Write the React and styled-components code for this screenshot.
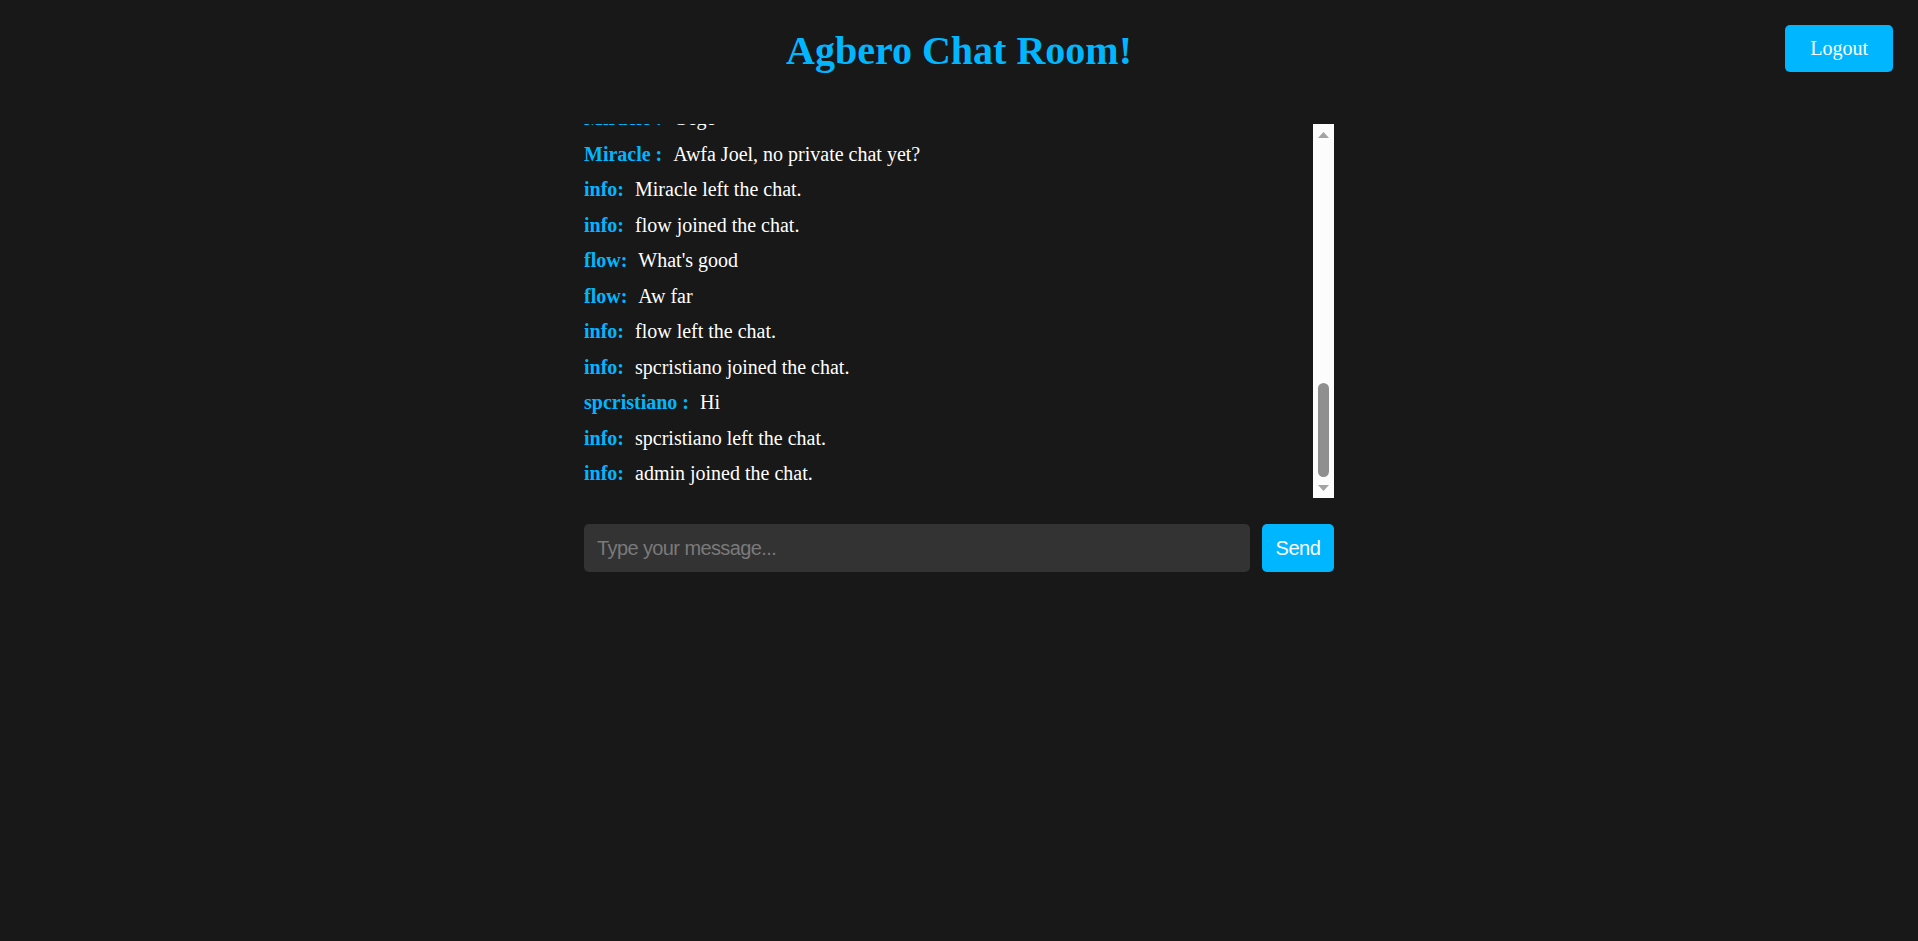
import React, { useLayoutEffect, useRef } from 'react';
import styled, { createGlobalStyle } from 'styled-components';

const BLUE = '#00b7ff';

const GlobalStyle = createGlobalStyle`
  html, body {
    margin: 0;
    padding: 0;
    background: #181818;
    color: #fff;
    font-family: "Liberation Serif", "Times New Roman", serif;
  }
`;

const Page = styled.div`
  min-height: 941px;
  background: #181818;
`;

const Header = styled.header`
  display: grid;
  grid-template-columns: 1fr auto 1fr;
  align-items: start;
`;

const Title = styled.h1`
  grid-column: 2;
  margin: 28px 0 27px;
  font-size: 40px;
  font-weight: bold;
  color: ${BLUE};
  line-height: 46px;
`;

const LogoutButton = styled.button`
  grid-column: 3;
  justify-self: end;
  margin: 25px 25px 0 0;
  padding: 12px 25px;
  border: none;
  border-radius: 5px;
  background: ${BLUE};
  color: #fff;
  font-family: "Liberation Serif", "Times New Roman", serif;
  font-size: 20px;
  line-height: 23px;
  cursor: pointer;
`;

const ChatWrap = styled.main`
  width: 750px;
  margin: 23px auto 0;
`;

const ChatBox = styled.div`
  display: flex;
  height: 374px;
`;

const Messages = styled.div`
  flex: 1;
  overflow: hidden;
`;

const ScrollBar = styled.div`
  width: 21px;
  display: flex;
  flex-direction: column;
  background: #fcfcfc;
`;

const ScrollArrow = styled.div`
  height: ${p => p.$h}px;
  display: flex;
  justify-content: center;
  align-items: ${p => (p.$down ? 'flex-start' : 'flex-end')};
  padding: ${p => (p.$down ? '8px 0 0' : '0 0 3px')};
  box-sizing: border-box;
`;

const Track = styled.div`
  flex: 1;
  display: flex;
  flex-direction: column;
  justify-content: flex-end;
`;

const Thumb = styled.div`
  height: 94px;
  margin: 0 5px;
  border-radius: 6px;
  background: #8f8f8f;
`;

const Row = styled.p`
  margin: 0 0 12.5px;
  font-size: 20px;
  line-height: 23px;
  color: #fff;
`;

const Sender = styled.strong`
  color: ${BLUE};
  margin-right: 11px;
`;

const Composer = styled.form`
  display: flex;
  gap: 12px;
  margin-top: 26px;
`;

const MessageInput = styled.input`
  flex: 1;
  height: 48px;
  box-sizing: border-box;
  padding: 0 13px;
  border: none;
  border-radius: 5px;
  background: #333;
  color: #fff;
  font-family: "Liberation Sans", Arial, sans-serif;
  font-size: 20px;
  letter-spacing: -0.6px;
  outline: none;

  &::placeholder {
    color: #7a7a7a;
  }
`;

const SendButton = styled.button`
  width: 72px;
  height: 48px;
  border: none;
  border-radius: 5px;
  background: ${BLUE};
  color: #fff;
  font-family: "Liberation Sans", Arial, sans-serif;
  font-size: 20px;
  letter-spacing: -0.4px;
  cursor: pointer;
`;

const history = [
  ['info:', 'Joel joined the chat.'],
  ['Joel :', 'Hello everyone'],
  ['info:', 'Miracle joined the chat.'],
  ['Miracle :', 'Hey Joel'],
  ['Joel :', 'How far?'],
  ['Miracle :', 'I dey o'],
  ['info:', 'tunde joined the chat.'],
  ['tunde :', 'Wetin dey happen'],
  ['Joel :', 'Nothing much'],
  ['info:', 'tunde left the chat.'],
  ['Joel :', 'This thing dey work sha'],
  ['Miracle :', 'E dey work well'],
  ['Joel :', 'Na socket.io'],
  ['Miracle :', 'Nice one'],
  ['info:', 'ada joined the chat.'],
  ['ada :', 'Hi guys'],
  ['Joel :', 'Ada!'],
  ['ada :', 'Good evening'],
  ['info:', 'ada left the chat.'],
  ['Joel :', 'I wan add private chat'],
  ['Miracle :', 'When?'],
  ['Joel :', 'Soon'],
  ['info:', 'Joel left the chat.'],
  ['Miracle :', 'Joel?'],
  ['Miracle :', 'Gege'],
  ['Miracle :', 'Awfa Joel, no private chat yet?'],
  ['info:', 'Miracle left the chat.'],
  ['info:', 'flow joined the chat.'],
  ['flow:', "What's good"],
  ['flow:', 'Aw far'],
  ['info:', 'flow left the chat.'],
  ['info:', 'spcristiano joined the chat.'],
  ['spcristiano :', 'Hi'],
  ['info:', 'spcristiano left the chat.'],
  ['info:', 'admin joined the chat.'],
];

export default function App() {
  const listRef = useRef(null);

  useLayoutEffect(() => {
    if (listRef.current) {
      listRef.current.scrollTop = listRef.current.scrollHeight;
    }
  }, []);

  return (
    <Page>
      <GlobalStyle />
      <Header>
        <Title>Agbero Chat Room!</Title>
        <LogoutButton type="button">Logout</LogoutButton>
      </Header>
      <ChatWrap>
        <ChatBox>
          <Messages ref={listRef}>
            {history.map(([who, text], i) => (
              <Row key={i}>
                <Sender>{who}</Sender>
                {text}
              </Row>
            ))}
          </Messages>
          <ScrollBar>
            <ScrollArrow $h={17}>
              <svg width="11" height="6" viewBox="0 0 11 6">
                <path d="M5.5 0 L11 6 L0 6 Z" fill="#a3a3a3" />
              </svg>
            </ScrollArrow>
            <Track>
              <Thumb />
            </Track>
            <ScrollArrow $h={21} $down>
              <svg width="11" height="6" viewBox="0 0 11 6">
                <path d="M0 0 L11 0 L5.5 6 Z" fill="#a3a3a3" />
              </svg>
            </ScrollArrow>
          </ScrollBar>
        </ChatBox>
        <Composer onSubmit={e => e.preventDefault()}>
          <MessageInput placeholder="Type your message..." />
          <SendButton type="submit">Send</SendButton>
        </Composer>
      </ChatWrap>
    </Page>
  );
}
